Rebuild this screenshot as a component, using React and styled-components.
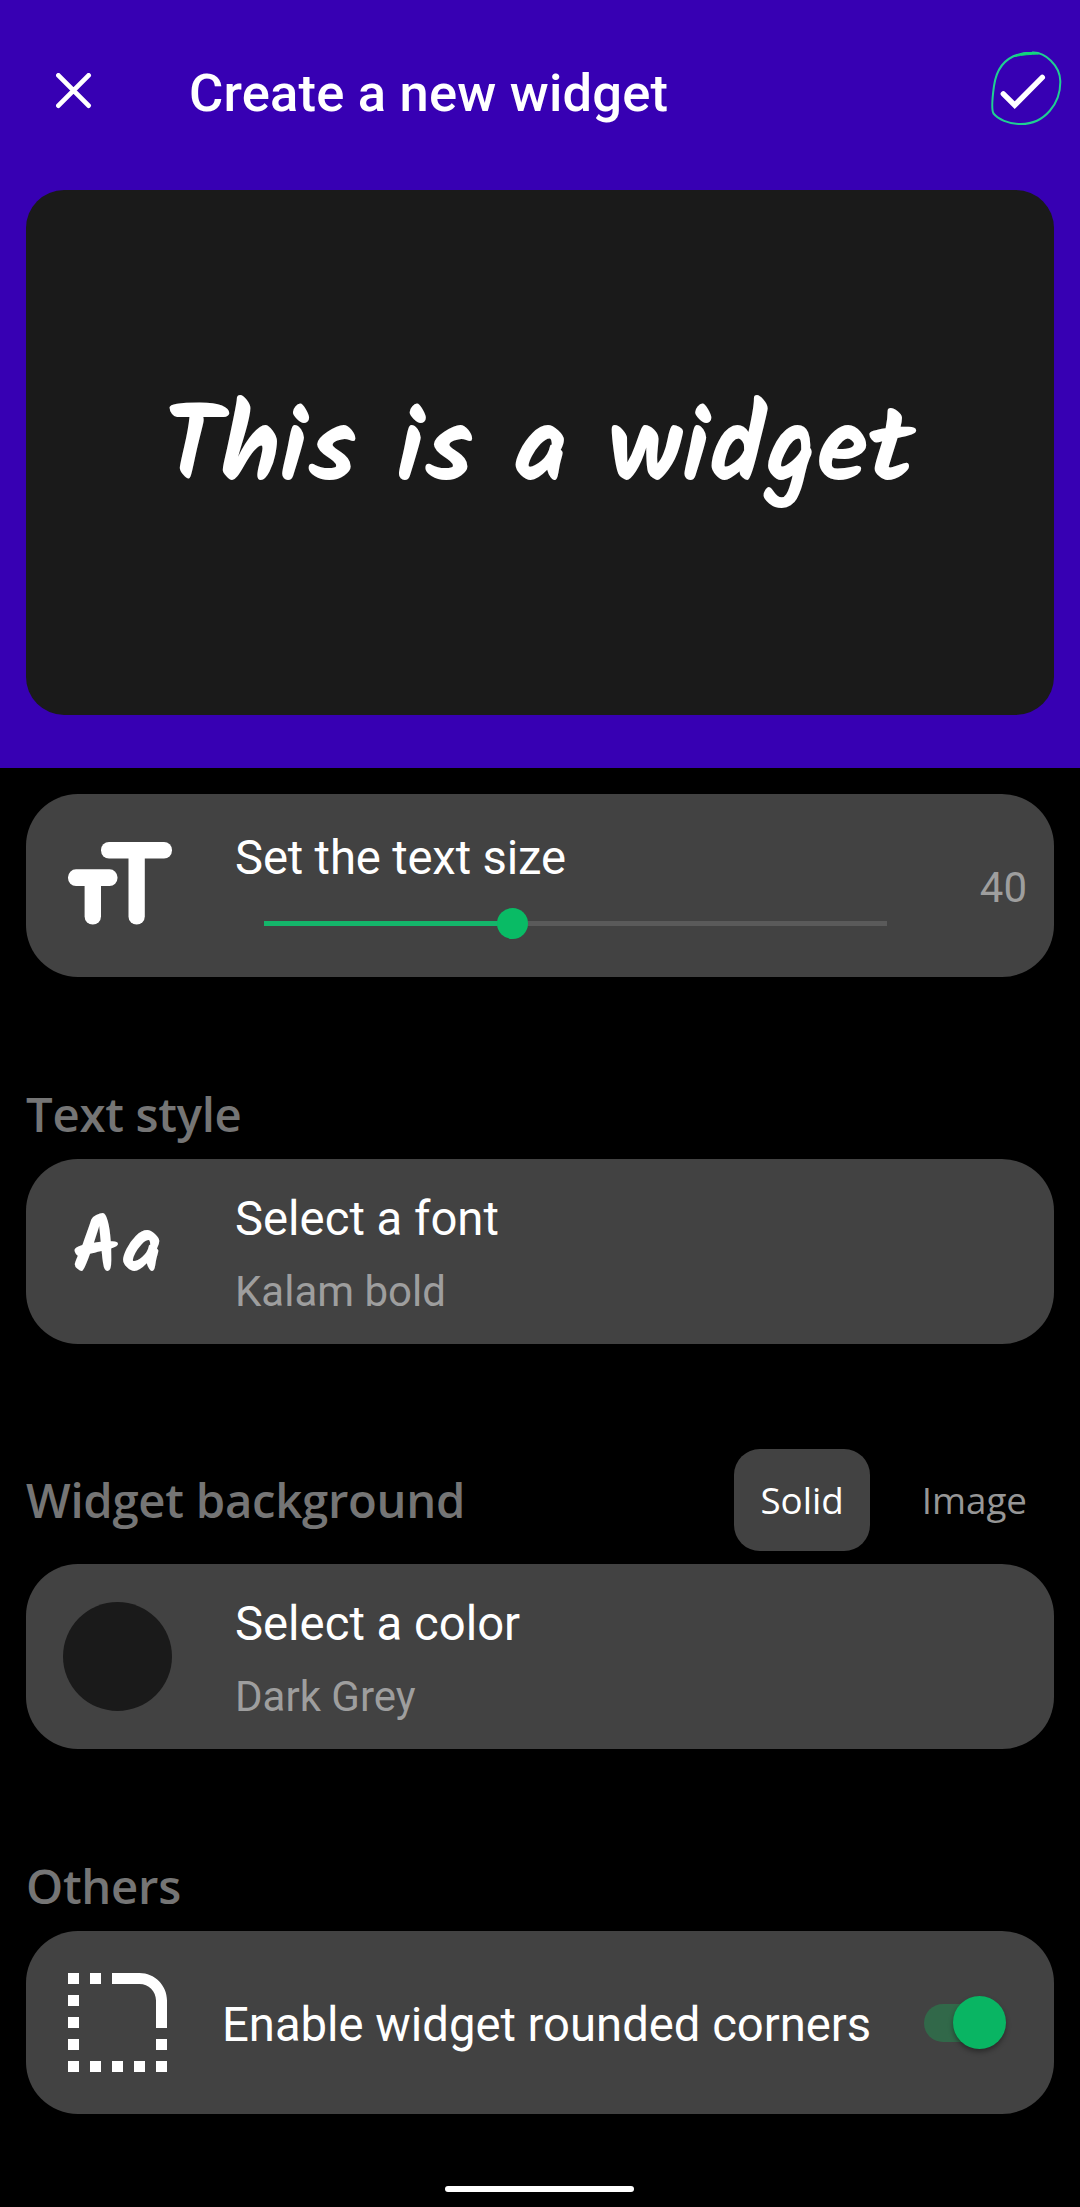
import React, { useState } from "react";
import styled, { createGlobalStyle } from "styled-components";

const GlobalStyle = createGlobalStyle`
  *, *::before, *::after { box-sizing: border-box; }
  body { margin: 0; background: #000; }
`;

const roboto = `Roboto, "Liberation Sans", sans-serif`;
const openSans = `"Open Sans", "Noto Sans", sans-serif`;
const handwriting = `Kalam, Lato, sans-serif`;

const Screen = styled.div`
  display: flex;
  flex-direction: column;
  width: 1080px;
  height: 2207px;
  overflow: hidden;
  background: #000;
  color: #fff;
  font-family: ${roboto};
`;

const Header = styled.header`
  display: flex;
  flex-direction: column;
  height: 768px;
  padding: 0 26px;
  background: #3700b3;
`;

const TopBar = styled.div`
  display: flex;
  align-items: center;
  height: 181px;
  margin-bottom: 9px;
`;

const IconButton = styled.button`
  display: flex;
  align-items: center;
  justify-content: center;
  width: ${(p) => p.$size}px;
  height: ${(p) => p.$size}px;
  margin: 0 ${(p) => p.$edge || 0}px 0 0;
  padding: 0;
  border: 0;
  background: none;
  color: inherit;
`;

const Title = styled.h1`
  flex: 1;
  margin: 5px 0 0 68px;
  font-size: 52.5px;
  line-height: 64px;
  font-weight: 500;
  letter-spacing: 0.2px;
  white-space: nowrap;
`;

const Preview = styled.div`
  display: flex;
  align-items: center;
  justify-content: center;
  height: 525px;
  border-radius: 38px;
  background: #1a1a1a;
`;

const PreviewText = styled.div`
  margin-right: 1px;
  font-family: ${handwriting};
  font-size: 105px;
  line-height: 130px;
  font-weight: 700;
  white-space: nowrap;
`;

const Settings = styled.main`
  display: flex;
  flex-direction: column;
  padding: 26px 26px 0;
`;

const Card = styled.section`
  display: flex;
  align-items: center;
  height: ${(p) => p.$height || 185}px;
  border-radius: 52px;
  background: #424242;
`;

const IconCell = styled.div`
  display: flex;
  flex: none;
  align-items: center;
  width: ${(p) => p.$width || 209}px;
  padding-left: ${(p) => p.$inset}px;
  padding-bottom: ${(p) => p.$lift || 0}px;
`;

const CardBody = styled.div`
  display: flex;
  flex: 1;
  flex-direction: column;
  align-self: flex-start;
  gap: ${(p) => p.$gap}px;
  padding-top: ${(p) => p.$top}px;
`;

const Label = styled.div`
  font-size: 47.25px;
  line-height: 56px;
  letter-spacing: ${(p) => p.$spacing || 0}px;
  white-space: nowrap;
`;

const Detail = styled.div`
  font-size: 42px;
  line-height: 50px;
  color: #9e9e9e;
`;

const SizeValue = styled(Detail)`
  margin: 4px 27px 0 0;
`;

const Slider = styled.div`
  display: flex;
  align-items: center;
  width: 623px;
  height: 32px;
  margin-left: 29px;
`;

const SliderFill = styled.div`
  height: 5px;
  background: #14b56a;
`;

const SliderThumb = styled.div`
  flex: none;
  width: 31px;
  height: 31px;
  margin: 0 -15.5px;
  border-radius: 50%;
  background: #09bb65;
  z-index: 1;
`;

const SliderRest = styled.div`
  flex: 1;
  height: 5px;
  background: #5a5a5a;
`;

const SectionHead = styled.div`
  display: flex;
  align-items: center;
  justify-content: space-between;
  min-height: 64px;
  margin: 105px 0 13px;
`;

const SectionTitle = styled.h2`
  margin: 0;
  font-family: ${openSans};
  font-size: 47.25px;
  line-height: 64px;
  font-weight: 600;
  letter-spacing: -0.27px;
  color: #757575;
  white-space: nowrap;
`;

const Tabs = styled.div`
  display: flex;
  gap: 26px;
`;

const Tab = styled.button`
  height: 102px;
  padding: 0 26px;
  border: 0;
  border-radius: 26px;
  background: ${(p) => (p.$active ? "#424242" : "transparent")};
  color: ${(p) => (p.$active ? "#fff" : "#969696")};
  font-family: ${openSans};
  font-size: 36.75px;
  line-height: 50px;

  &:last-child {
    margin-right: 1px;
  }
`;

const FontSample = styled.div`
  font-family: ${handwriting};
  font-size: 78.75px;
  line-height: 96px;
  font-weight: 700;
`;

const Swatch = styled.div`
  width: 109px;
  height: 109px;
  border-radius: 50%;
  background: #1a1a1a;
`;

const SwitchTrack = styled.button`
  display: flex;
  flex: none;
  align-items: center;
  justify-content: flex-end;
  width: 77px;
  height: 38px;
  margin: 0 53px 0 0;
  padding: 0;
  border: 0;
  border-radius: 19px;
  background: #316849;
`;

const SwitchThumb = styled.span`
  flex: none;
  width: 53px;
  height: 53px;
  margin-right: -5px;
  border-radius: 50%;
  background: #09b563;
  box-shadow: 0 3px 5px rgba(0, 0, 0, 0.35);
`;

const HomeBar = styled.div`
  align-self: center;
  width: 189px;
  height: 6px;
  margin: 72px 1px 0 0;
  border-radius: 3px;
  background: #fff;
`;

function CloseIcon() {
  return (
    <svg width="36" height="36" viewBox="0.5 0.5 36 36" fill="none" stroke="currentColor" strokeWidth="4.8" strokeLinecap="round">
      <path d="M2.9 2.9 33.1 33.1M33.1 2.9 2.9 33.1" />
    </svg>
  );
}

function ConfirmIcon() {
  return (
    <svg width="80" height="80" viewBox="0 1 80 80" fill="none">
      <path
        d="M42 2.6C55 1.5 70 16 70.3 31C70.8 53 55 74 31 74C18 74 8 69 3.5 63.5C1.5 60 2.3 48 4 36C6.5 18 16 3 42 2.6Z"
        stroke="#20cf92"
        strokeWidth="2"
      />
      <path d="M25 6.5C32 2.6 40 1.6 48.5 4C41 4.4 32 4.8 25 6.5Z" fill="#10d778" stroke="#10d778" />
      <path d="M13.3 43.8 24.7 55.2 52.3 27.4" stroke="#fff" strokeWidth="5.4" strokeLinecap="round" />
    </svg>
  );
}

function TextSizeIcon() {
  return (
    <svg width="104" height="83" viewBox="0 0 104 83" fill="currentColor">
      <rect x="33" y="0" width="71" height="16.5" rx="8" />
      <rect x="60.5" y="2" width="16.3" height="80.5" rx="8.1" />
      <rect x="0" y="27.3" width="49.5" height="16.7" rx="8" />
      <rect x="16.6" y="30" width="16.4" height="52.5" rx="8.1" />
    </svg>
  );
}

function RoundedCornerIcon() {
  return (
    <svg width="99" height="99" viewBox="3 3 18 18" fill="currentColor">
      <path d="M19 19h2v2h-2v-2zm0-2h2v-2h-2v2zM3 13h2v-2H3v2zm0 4h2v-2H3v2zm0-8h2V7H3v2zm0-4h2V3H3v2zm4 0h2V3H7v2zm8 16h2v-2h-2v2zm-4 0h2v-2h-2v2zm-4 0h2v-2H7v2zm-4 0h2v-2H3v2zM21 8c0-2.76-2.24-5-5-5h-5v2h5c1.65 0 3 1.35 3 3v5h2V8z" />
    </svg>
  );
}

export default function App() {
  const [background, setBackground] = useState("Solid");
  const textSize = 40;

  return (
    <>
      <GlobalStyle />
      <Screen>
        <Header>
          <TopBar>
            <IconButton $size={95} aria-label="Close">
              <CloseIcon />
            </IconButton>
            <Title>Create a new widget</Title>
            <IconButton $size={80} $edge={-16} aria-label="Save">
              <ConfirmIcon />
            </IconButton>
          </TopBar>
          <Preview>
            <PreviewText>This is a widget</PreviewText>
          </Preview>
        </Header>

        <Settings>
          <Card $height={183}>
            <IconCell $inset={42} $lift={5}>
              <TextSizeIcon />
            </IconCell>
            <CardBody $top={36} $gap={21}>
              <Label $spacing={-0.17}>Set the text size</Label>
              <Slider>
                <SliderFill style={{ width: `${textSize - 0.1}%` }} />
                <SliderThumb />
                <SliderRest />
              </Slider>
            </CardBody>
            <SizeValue>{textSize}</SizeValue>
          </Card>

          <SectionHead>
            <SectionTitle>Text style</SectionTitle>
          </SectionHead>
          <Card>
            <IconCell $inset={46} $lift={1}>
              <FontSample>Aa</FontSample>
            </IconCell>
            <CardBody $top={32} $gap={20}>
              <Label>Select a font</Label>
              <Detail>Kalam bold</Detail>
            </CardBody>
          </Card>

          <SectionHead>
            <SectionTitle>Widget background</SectionTitle>
            <Tabs>
              {["Solid", "Image"].map((name) => (
                <Tab key={name} $active={background === name} onClick={() => setBackground(name)}>
                  {name}
                </Tab>
              ))}
            </Tabs>
          </SectionHead>
          <Card>
            <IconCell $inset={37}>
              <Swatch />
            </IconCell>
            <CardBody $top={32} $gap={20}>
              <Label>Select a color</Label>
              <Detail>Dark Grey</Detail>
            </CardBody>
          </Card>

          <SectionHead>
            <SectionTitle>Others</SectionTitle>
          </SectionHead>
          <Card $height={183}>
            <IconCell $inset={42} $width={196}>
              <RoundedCornerIcon />
            </IconCell>
            <CardBody $top={66} $gap={0}>
              <Label $spacing={-0.02}>Enable widget rounded corners</Label>
            </CardBody>
            <SwitchTrack role="switch" aria-checked="true" aria-label="Rounded corners">
              <SwitchThumb />
            </SwitchTrack>
          </Card>
        </Settings>
        <HomeBar />
      </Screen>
    </>
  );
}
